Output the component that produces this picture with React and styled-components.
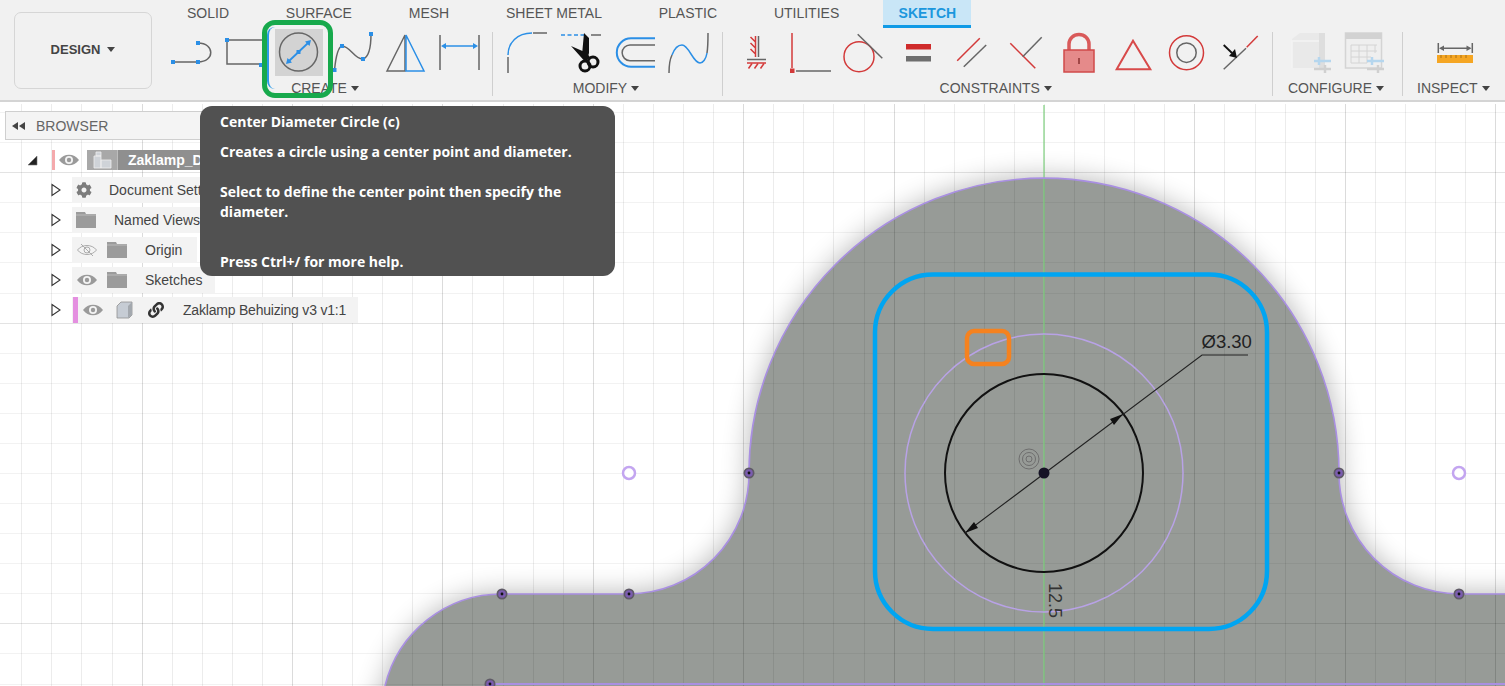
import React from "react";
import styled, { createGlobalStyle } from "styled-components";
import { FaCog, FaLink } from "react-icons/fa";

const GlobalStyle = createGlobalStyle`
  html, body {
    margin: 0;
    padding: 0;
    height: 686px;
    overflow: hidden;
    background: #fff;
    font-family: "Liberation Sans", Arial, sans-serif;
  }
`;

const Page = styled.div`
  position: relative;
  width: 1505px;
  height: 686px;
  overflow: hidden;
  display: flex;
  flex-direction: column;
`;

const Toolbar = styled.header`
  display: flex;
  flex: none;
  height: 100px;
  background: #f1f1f1;
  border-bottom: 2px solid #d4d4d4;
`;

const DesignButton = styled.div`
  flex: none;
  display: flex;
  align-items: center;
  justify-content: center;
  gap: 7px;
  box-sizing: border-box;
  width: 138px;
  height: 77px;
  margin: 12px 13px 0 14px;
  padding-bottom: 2px;
  border: 1px solid #d6d6d6;
  border-radius: 7px;
  font-size: 13px;
  font-weight: bold;
  color: #444;
`;

const Caret = styled.span`
  display: inline-block;
  border-left: 4px solid transparent;
  border-right: 4px solid transparent;
  border-top: 5px solid #444;
`;

const Main = styled.div`
  display: flex;
  flex-direction: column;
`;

const Tabs = styled.nav`
  display: flex;
  gap: 24.8px;
  height: 28px;
  padding-left: 6px;
`;

const Tab = styled.div`
  box-sizing: border-box;
  height: 28px;
  margin-left: ${({ $active }) => ($active ? "2.5px" : "0")};
  padding: 5px ${({ $active }) => ($active ? "15px" : "16px")} 0 16px;
  font-size: 14px;
  line-height: 16px;
  color: ${({ $active }) => ($active ? "#1c97dd" : "#555")};
  font-weight: ${({ $active }) => ($active ? "bold" : "normal")};
  background: ${({ $active }) => ($active ? "#c9e6f7" : "transparent")};
  border-bottom: ${({ $active }) => ($active ? "3px solid #0f9ae6" : "none")};
`;

const Ribbon = styled.div`
  display: flex;
  margin-top: 1px;
`;

const Group = styled.section`
  display: flex;
  flex-direction: column;
  padding: 0 ${({ $right }) => $right}px 0 ${({ $left }) => $left}px;
`;

const Tools = styled.div`
  display: flex;
  justify-content: center;
  gap: ${({ $gap }) => $gap || 6}px;
`;

const Tool = styled.div`
  position: relative;
  width: 48px;
  height: 47px;
  margin: ${({ $active }) => ($active ? "0 1px 0 -1px" : "0")};
  background: ${({ $active }) => ($active ? "#d3d3d3" : "transparent")};

  svg {
    display: block;
    overflow: visible;
  }
`;

const GroupLabel = styled.div`
  display: flex;
  align-items: center;
  justify-content: center;
  gap: 4px;
  height: 16px;
  margin-top: 4px;
  padding-right: 4px;
  font-size: 14px;
  color: #555;
  white-space: nowrap;
`;

const Separator = styled.div`
  flex: none;
  width: 1px;
  height: 64px;
  margin-top: 3px;
  background: #cfcfcf;
`;

const Highlight = styled.div`
  position: absolute;
  left: -13px;
  top: -9px;
  box-sizing: border-box;
  width: 71px;
  height: 78px;
  border: 5px solid #17a94c;
  border-radius: 13px;
  z-index: 3;

  &::before {
    content: "";
    position: absolute;
    left: 0;
    top: 2px;
    bottom: 4px;
    width: 8px;
    border-left: 2px solid #2b9be8;
    border-radius: 8px 0 0 8px;
  }
`;

const Canvas = styled.main`
  position: relative;
  flex: 1;
  background: #fff;

  > svg {
    display: block;
  }
`;

const BrowserPanel = styled.aside`
  position: absolute;
  left: 5px;
  top: 9px;
  width: 380px;
`;

const BrowserHeader = styled.div`
  display: flex;
  align-items: center;
  gap: 11px;
  box-sizing: border-box;
  width: 215px;
  height: 29px;
  padding-left: 6px;
  margin-bottom: 5px;
  background: #f4f4f4;
  border: 1px solid #cfcfcf;
  font-size: 14px;
  color: #666;
`;

const TreeRow = styled.div`
  display: flex;
  align-items: center;
  height: 30px;
  padding-left: ${({ $root }) => ($root ? 23 : 45)}px;

  svg {
    flex: none;
  }
`;

const Expander = styled.svg`
  width: 12px;
  height: 14px;
  margin-right: 10px;
`;

const RowBody = styled.div`
  display: flex;
  flex: none;
  align-items: center;
  box-sizing: border-box;
  height: 26px;
  width: ${({ $width }) => $width}px;
  padding-left: ${({ $pad }) => $pad || 0}px;
  background: #f3f3f3;
  font-size: 14px;
  color: #444;
  white-space: nowrap;
`;

const ColorBar = styled.span`
  flex: none;
  width: ${({ $w }) => $w}px;
  height: ${({ $h }) => $h}px;
  margin-right: ${({ $gap }) => $gap}px;
  background: ${({ $color }) => $color};
`;

const ComponentBox = styled.div`
  display: flex;
  flex: none;
  align-items: center;
  height: 20px;
  width: 240px;
  margin-left: 8px;
  background: #8f8f8f;
  font-size: 14px;
  font-weight: bold;
  color: #fff;
`;

const BoxIcon = styled.div`
  display: flex;
  flex: none;
  align-items: center;
  justify-content: center;
  width: 30px;
  height: 20px;
  margin-right: 10px;
  background: #a8a8a8;
  border-right: 1px solid #bdbdbd;
`;

const Spaced = styled.span`
  display: inline-flex;
  flex: none;
  margin-left: ${({ $l }) => $l || 0}px;
  letter-spacing: ${({ $tight }) => ($tight ? "-0.2px" : "normal")};
`;

const Tooltip = styled.div`
  position: absolute;
  left: 200px;
  top: 4px;
  box-sizing: border-box;
  width: 415px;
  height: 170px;
  padding: 6px 30px 0 20px;
  background: #515151;
  border-radius: 12px;
  font-family: "Open Sans", "Noto Sans", sans-serif;
  font-size: 14px;
  font-weight: 700;
  line-height: 20px;
  color: #fff;
  z-index: 4;
`;

const TooltipTitle = styled.div`
  margin-bottom: 10px;
`;

const TooltipText = styled.p`
  margin: 0 0 ${({ $after }) => $after}px;
`;

const gray = "#666";
const blue = "#2b8fe6";
const red = "#d33a3a";

const Dot = ({ x, y }) => <rect x={x - 2} y={y - 2} width="4" height="4" fill={blue} />;

const Icon = ({ children }) => (
  <svg width="48" height="47" viewBox="0 0 48 47" fill="none" strokeWidth="1.5">
    {children}
  </svg>
);

const ArcLineIcon = () => (
  <Icon>
    <path d="M5 33H30M30 14C47 14 47 33 30 33" stroke={gray} />
    <Dot x={5} y={33} />
    <Dot x={30} y={33} />
    <Dot x={30} y={14} />
  </Icon>
);

const RectangleIcon = () => (
  <Icon>
    <path d="M46 11H5V35H46" stroke={gray} />
    <Dot x={5} y={11} />
    <Dot x={39} y={36} />
  </Icon>
);

const DiameterCircleIcon = () => (
  <Icon>
    <circle cx="23.5" cy="23" r="19" stroke={gray} />
    <path d="M14 32L33 14" stroke={blue} strokeWidth="1.8" />
    <path d="M11 35L12.5 29L17 33.5ZM36 11L30 12.5L34.5 17Z" fill={blue} />
    <Dot x={23.5} y={23} />
  </Icon>
);

const SplineIcon = () => (
  <Icon>
    <path d="M4.5 41C6 26 8 18 12 17C20 17 25 31 33 30C39 28 41 16 41 5" stroke={gray} />
    <Dot x={4.5} y={41} />
    <Dot x={12} y={17} />
    <Dot x={33} y={30} />
    <Dot x={41} y={5} />
  </Icon>
);

const MirrorIcon = () => (
  <Icon>
    <path d="M3 42L21 6V42Z" stroke={gray} />
    <path d="M22 6L40 42H22Z" stroke={blue} />
  </Icon>
);

const DimensionIcon = () => (
  <Icon>
    <path d="M2 6V41M41 6V41" stroke={gray} />
    <path d="M6 17H37" stroke={blue} />
    <path d="M3 17L8 14V20ZM40 17L35 14V20Z" fill={blue} />
  </Icon>
);

const FilletIcon = () => (
  <Icon>
    <path d="M5 28V44M30 4H44" stroke={gray} />
    <path d="M5 26C5 14 14 4 29 4" stroke={blue} />
  </Icon>
);

const TrimIcon = () => (
  <Icon>
    <path d="M4 6H28" stroke={blue} strokeDasharray="4 2.5" />
    <path d="M34 6H44" stroke={gray} />
    <path d="M27 4L32 9V24L29.5 33L25 26ZM14 17L30 24L33.5 29L27 31.5Z" fill="#111" />
    <circle cx="28" cy="37" r="5" stroke="#111" strokeWidth="3" />
    <circle cx="36" cy="33" r="5" stroke="#111" strokeWidth="3" />
  </Icon>
);

const OffsetIcon = () => (
  <Icon>
    <path d="M44 9.3H20A14.2 14.2 0 0 0 20 37.7H44" stroke={blue} strokeWidth="2" />
    <path d="M44 16H19A7.85 7.85 0 0 0 19 31.7H44" stroke={gray} strokeWidth="1.5" />
  </Icon>
);

const FitSplineIcon = () => (
  <Icon>
    <path d="M4 44C4 36 5 30 7 26M42 24C43 18 43 10 43 4" stroke={gray} />
    <path d="M7 26C10 18 14 16 17 16C24 16 28 34 35 34C38 34 41 30 42 24" stroke={blue} />
  </Icon>
);

const FixIcon = () => (
  <Icon>
    <path d="M25.5 7V28M14 30.5H33" stroke={gray} />
    <path d="M22.5 7V28M17.5 8L22.5 13M17.5 14L22.5 19M17.5 20L22.5 25M14 34H33" stroke={red} />
    <path d="M19 34.5L15.5 39.5M25 34.5L21.5 39.5M31 34.5L27.5 39.5" stroke={red} />
  </Icon>
);

const PerpendicularIcon = () => (
  <Icon>
    <path d="M5 4V39" stroke={red} />
    <rect x="3" y="39.5" width="4.5" height="4.5" fill={red} />
    <path d="M9 42H44" stroke={gray} />
  </Icon>
);

const TangentIcon = () => (
  <Icon>
    <circle cx="19" cy="27.7" r="15" stroke={red} />
    <path d="M17.7 5.3L42.3 29.3" stroke={gray} />
  </Icon>
);

const EqualIcon = () => (
  <Icon>
    <rect x="12" y="15" width="25" height="5.5" fill="#cf2b2b" />
    <rect x="12" y="27" width="25" height="5.5" fill="#6e6e6e" />
  </Icon>
);

const ParallelIcon = () => (
  <Icon>
    <path d="M10.2 31.7L32.8 9.3" stroke={red} />
    <path d="M16.8 37.7L39.2 16" stroke={gray} />
  </Icon>
);

const CoincidentIcon = () => (
  <Icon>
    <path d="M9.3 14.3L34.3 39.3" stroke={red} />
    <path d="M21.7 27.7L40.7 8.3" stroke={gray} />
  </Icon>
);

const LockIcon = () => (
  <Icon>
    <path d="M15 21V15A10 9.5 0 0 1 35 15V21" stroke="#d95a5a" strokeWidth="3.5" />
    <rect x="10" y="21" width="30" height="22" fill="#e58a8a" stroke="#d04a4a" />
    <path d="M25 29V35" stroke="#8a3030" />
  </Icon>
);

const TriangleIcon = () => (
  <Icon>
    <path d="M8.7 40.3L25 11.7L42.3 40.3Z" stroke="#d84a4a" strokeWidth="2" />
  </Icon>
);

const ConcentricIcon = () => (
  <Icon>
    <circle cx="25.5" cy="23.7" r="17" stroke={red} />
    <circle cx="25.5" cy="23.7" r="9.7" stroke={gray} />
  </Icon>
);

const MidpointIcon = () => (
  <Icon>
    <path d="M8.7 40.3L31 19.3" stroke={gray} />
    <path d="M31.7 18.3L42.7 7" stroke={red} />
    <path d="M8.7 16L17 24" stroke="#111" strokeWidth="1.8" />
    <path d="M22 29L14 27L20 20Z" fill="#111" />
  </Icon>
);

const ParameterSliders = ({ x }) => (
  <>
    <path d={`M${x} 32H${x + 17}`} stroke="#b5d6ee" strokeWidth="2.5" />
    <path d={`M${x} 40H${x + 17}`} stroke="#d0d0d0" strokeWidth="2.5" />
    <path d={`M${x + 5} 28V36`} stroke="#b5d6ee" strokeWidth="2.5" />
    <path d={`M${x + 11} 36V44`} stroke="#d0d0d0" strokeWidth="2.5" />
  </>
);

const ConfigCubeIcon = () => (
  <Icon>
    <path d="M5 10L13 4H38V39H5Z" fill="#e9e9e9" />
    <path d="M32 4H38V39H32Z" fill="#dedede" />
    <path d="M5 39V12H32" stroke="#f3f3f3" />
    <ParameterSliders x={27} />
  </Icon>
);

const ConfigTableIcon = () => (
  <Icon>
    <rect x="4.5" y="4" width="36" height="35" fill="#efefef" stroke="#d4d4d4" />
    <rect x="4.5" y="4" width="36" height="6" fill="#d2d2d2" />
    <path d="M10 16H36M10 22H36M10 28H30M10 34H26M10 16V34M18 16V34M26 16V34M34 16V24" stroke="#d4d4d4" strokeWidth="1" />
    <ParameterSliders x={26} />
  </Icon>
);

const MeasureIcon = () => (
  <Icon>
    <path d="M7.3 14V24M41.3 14V24M10 19.3H38.5" stroke={gray} />
    <path d="M8 19.3L13 16.5V22ZM40.5 19.3L35.5 16.5V22Z" fill={gray} />
    <rect x="6" y="26" width="36" height="8" fill="#f5a623" />
    <path d="M10 26V29M15 26V29M20 26V29M25 26V29M30 26V29M35 26V29" stroke="#a8701a" strokeWidth="1" />
  </Icon>
);

const Eye = () => (
  <svg width="20" height="12" viewBox="0 0 20 12">
    <path d="M0 6C5 -1 15 -1 20 6C15 13 5 13 0 6Z" fill="#9a9a9a" />
    <circle cx="10" cy="6" r="4" fill="#f3f3f3" />
    <circle cx="10" cy="6" r="2.2" fill="#9a9a9a" />
  </svg>
);

const HiddenEye = () => (
  <svg width="20" height="14" viewBox="0 0 20 14" fill="none" stroke="#ababab" strokeWidth="1">
    <path d="M0.5 7C5 1 15 1 19.5 7C15 13 5 13 0.5 7Z" />
    <circle cx="10" cy="7" r="3" />
    <path d="M4 1L16 13" />
  </svg>
);

const Folder = () => (
  <svg width="20" height="16" viewBox="0 0 20 16">
    <path d="M0 0H9L10 2H20V16H0Z" fill="#9b9b9b" />
    <path d="M0 3H20" stroke="#c4c4c4" strokeWidth="0.8" />
  </svg>
);

const Cube = () => (
  <svg width="17" height="18" viewBox="0 0 17 18">
    <path d="M1 5L5 1H16V14L13 17H1Z" fill="#c6ccd4" stroke="#8f8f8f" strokeWidth="0.8" />
    <path d="M12 5L16 1V14L12 17Z" fill="#a3a8ae" />
  </svg>
);

const ComponentsIcon = () => (
  <svg width="19" height="18" viewBox="0 0 19 18">
    <path d="M1 5H8V17H1ZM8 9H18V17H8ZM3 1H8V5H3Z" fill="#cfd3d8" stroke="#efefef" strokeWidth="0.8" />
  </svg>
);

const RowExpander = () => (
  <Expander viewBox="0 0 12 14">
    <path d="M2 1.5L10 7L2 12.5Z" fill="#fff" stroke="#333" strokeWidth="1.1" />
  </Expander>
);

const RootExpander = () => (
  <svg width="24" height="12" viewBox="0 0 24 12">
    <path d="M0 11L9 2V11Z" fill="#222" stroke="#777" strokeWidth="0.6" />
  </svg>
);

const CollapseIcon = () => (
  <svg width="13" height="8" viewBox="0 0 13 8">
    <path d="M6 0V8L0 4ZM13 0V8L7 4Z" fill="#444" />
  </svg>
);

// canvas drawing, coordinates are page pixels
const OUTLINE =
  "M385 686A120 120 0 0 1 502 594H629A120.5 120.5 0 0 0 749 473A295 295 0 0 1 1339 473A120.5 120.5 0 0 0 1459 594H1540V720H370Z";

const CENTER_X = 1044;
const CENTER_Y = 473;
const STEP = 30.08;

const gridLines = (center, min, max) => {
  const lines = [];
  for (let i = Math.ceil((min - center) / STEP); i <= Math.floor((max - center) / STEP); i++) {
    lines.push({ pos: Math.round(center + i * STEP) + 0.5, major: i % 5 === 0 && i !== 0 });
  }
  return lines;
};

const SketchPoint = ({ x, y }) => (
  <>
    <circle cx={x} cy={y} r="5.5" fill="#5f5a66" />
    <circle cx={x} cy={y} r="3.8" fill="#7b5cb0" />
    <circle cx={x} cy={y} r="1.4" fill="#111" />
  </>
);

const CenterPoint = ({ x, y }) => (
  <circle cx={x} cy={y} r="6" fill="#fff" stroke="#c3a5f0" strokeWidth="2.5" />
);

const Drawing = () => (
  <svg width="1505" height="584" viewBox="0 102 1505 584">
    <defs>
      <filter id="soft" x="-20%" y="-20%" width="140%" height="140%">
        <feGaussianBlur stdDeviation="14" />
      </filter>
    </defs>
    <path d={OUTLINE} fill="#000" opacity="0.3" filter="url(#soft)" />
    <path d={OUTLINE} fill="#979b97" />
    {gridLines(CENTER_X, 0, 1505).map(({ pos, major }) => (
      <line key={pos} x1={pos} x2={pos} y1="104" y2="686" stroke="#000" strokeOpacity={major ? 0.14 : 0.075} />
    ))}
    {gridLines(CENTER_Y, 104, 686).map(({ pos, major }) => (
      <line key={pos} x1="0" x2="1505" y1={pos} y2={pos} stroke="#000" strokeOpacity={major ? 0.11 : 0.05} />
    ))}
    <line x1="1044" x2="1044" y1="105" y2="686" stroke="#7fd07f" strokeOpacity="0.6" strokeWidth="2" />
    <path d={OUTLINE} fill="none" stroke="#a98fe2" strokeWidth="1.6" />
    <path d="M490 684H1505" stroke="#a98fe2" strokeWidth="2" />

    <rect x="875" y="274.5" width="392" height="354.5" rx="58" fill="none" stroke="#00a5f2" strokeWidth="4.5" />
    <circle cx="1044" cy="473" r="139" fill="none" stroke="#b8a2e6" strokeWidth="1.5" />
    <circle cx="1044" cy="473" r="99" fill="none" stroke="#111" strokeWidth="2" />
    <rect x="967" y="331" width="42" height="33" rx="7" fill="none" stroke="#f5821f" strokeWidth="4.5" />

    <path d="M965 533L1202 355H1248" fill="none" stroke="#222" strokeWidth="1.1" />
    <path d="M1123 414L1110 419L1114 425ZM965 533L978 528L974 522Z" fill="#111" />
    <text x="1201.5" y="348" fontSize="18.5" fill="#222" fontFamily="Liberation Sans">Ø3.30</text>
    <text
      transform="translate(1049 583) rotate(90)"
      fontSize="18"
      fill="#333"
      fontFamily="Liberation Sans"
    >
      12.5
    </text>

    <g fill="none" stroke="#6e6e6e">
      <circle cx="1029" cy="459" r="10" />
      <circle cx="1029" cy="459" r="6.5" />
      <circle cx="1029" cy="459" r="3" />
    </g>
    <circle cx="1044" cy="473" r="5.5" fill="#151225" />

    <SketchPoint x={749} y={473} />
    <SketchPoint x={1339} y={473} />
    <SketchPoint x={502} y={594} />
    <SketchPoint x={629} y={594} />
    <SketchPoint x={1459} y={594} />
    <SketchPoint x={490} y={684} />
    <CenterPoint x={629} y={473} />
    <CenterPoint x={1459} y={473} />
  </svg>
);

const App = () => (
  <Page>
    <GlobalStyle />
    <Toolbar>
      <DesignButton>
        DESIGN <Caret />
      </DesignButton>
      <Main>
        <Tabs>
          <Tab>SOLID</Tab>
          <Tab>SURFACE</Tab>
          <Tab>MESH</Tab>
          <Tab>SHEET METAL</Tab>
          <Tab>PLASTIC</Tab>
          <Tab>UTILITIES</Tab>
          <Tab $active>SKETCH</Tab>
        </Tabs>
        <Ribbon>
          <Group $left={3} $right={6}>
            <Tools>
              <Tool><ArcLineIcon /></Tool>
              <Tool><RectangleIcon /></Tool>
              <Tool $active>
                <DiameterCircleIcon />
                <Highlight />
              </Tool>
              <Tool><SplineIcon /></Tool>
              <Tool><MirrorIcon /></Tool>
              <Tool><DimensionIcon /></Tool>
            </Tools>
            <GroupLabel>CREATE <Caret /></GroupLabel>
          </Group>
          <Separator />
          <Group $left={10} $right={9}>
            <Tools>
              <Tool><FilletIcon /></Tool>
              <Tool><TrimIcon /></Tool>
              <Tool><OffsetIcon /></Tool>
              <Tool><FitSplineIcon /></Tool>
            </Tools>
            <GroupLabel>MODIFY <Caret /></GroupLabel>
          </Group>
          <Separator />
          <Group $left={10} $right={9.5}>
            <Tools $gap={5.5}>
              <Tool><FixIcon /></Tool>
              <Tool><PerpendicularIcon /></Tool>
              <Tool><TangentIcon /></Tool>
              <Tool><EqualIcon /></Tool>
              <Tool><ParallelIcon /></Tool>
              <Tool><CoincidentIcon /></Tool>
              <Tool><LockIcon /></Tool>
              <Tool><TriangleIcon /></Tool>
              <Tool><ConcentricIcon /></Tool>
              <Tool><MidpointIcon /></Tool>
            </Tools>
            <GroupLabel>CONSTRAINTS <Caret /></GroupLabel>
          </Group>
          <Separator />
          <Group $left={14} $right={13}>
            <Tools>
              <Tool><ConfigCubeIcon /></Tool>
              <Tool><ConfigTableIcon /></Tool>
            </Tools>
            <GroupLabel>CONFIGURE <Caret /></GroupLabel>
          </Group>
          <Separator />
          <Group $left={14} $right={0}>
            <Tools>
              <Tool><MeasureIcon /></Tool>
            </Tools>
            <GroupLabel>INSPECT <Caret /></GroupLabel>
          </Group>
        </Ribbon>
      </Main>
    </Toolbar>

    <Canvas>
      <Drawing />
      <BrowserPanel>
        <BrowserHeader>
          <CollapseIcon />
          BROWSER
        </BrowserHeader>
        <TreeRow $root>
          <RootExpander />
          <ColorBar $w={3} $h={20} $gap={4} $color="#f4a9ac" />
          <Eye />
          <ComponentBox>
            <BoxIcon><ComponentsIcon /></BoxIcon>
            Zaklamp_Design
          </ComponentBox>
        </TreeRow>
        <TreeRow>
          <RowExpander />
          <RowBody $width={150} $pad={4}>
            <FaCog size={16} color="#7c7c7c" />
            <Spaced $l={17}>Document Settings</Spaced>
          </RowBody>
        </TreeRow>
        <TreeRow>
          <RowExpander />
          <RowBody $width={150} $pad={4}>
            <Folder />
            <Spaced $l={18}>Named Views</Spaced>
          </RowBody>
        </TreeRow>
        <TreeRow>
          <RowExpander />
          <RowBody $width={125} $pad={5}>
            <HiddenEye />
            <Spaced $l={10}><Folder /></Spaced>
            <Spaced $l={18}>Origin</Spaced>
          </RowBody>
        </TreeRow>
        <TreeRow>
          <RowExpander />
          <RowBody $width={143} $pad={5}>
            <Eye />
            <Spaced $l={10}><Folder /></Spaced>
            <Spaced $l={18}>Sketches</Spaced>
          </RowBody>
        </TreeRow>
        <TreeRow>
          <RowExpander />
          <RowBody $width={286} $pad={1}>
            <ColorBar $w={5} $h={26} $gap={5} $color="#e48fe0" />
            <Eye />
            <Spaced $l={13}><Cube /></Spaced>
            <Spaced $l={15}><FaLink size={16} color="#333" /></Spaced>
            <Spaced $l={19} $tight>Zaklamp Behuizing v3 v1:1</Spaced>
          </RowBody>
        </TreeRow>
      </BrowserPanel>
      <Tooltip>
        <TooltipTitle>Center Diameter Circle (c)</TooltipTitle>
        <TooltipText $after={20}>Creates a circle using a center point and diameter.</TooltipText>
        <TooltipText $after={30}>Select to define the center point then specify the diameter.</TooltipText>
        <TooltipText $after={0}>Press Ctrl+/ for more help.</TooltipText>
      </Tooltip>
    </Canvas>
  </Page>
);

export default App;
